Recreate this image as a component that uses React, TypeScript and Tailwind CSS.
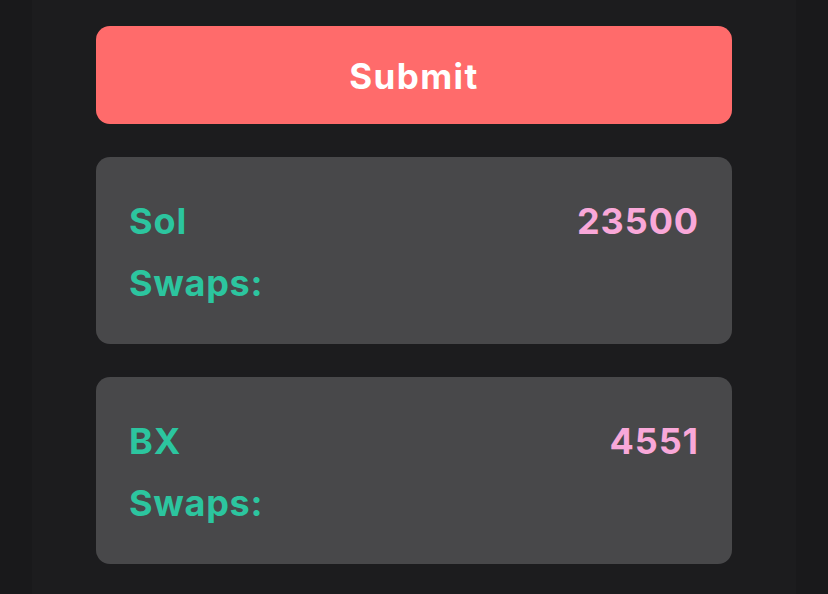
const balances = [
  { name: "Sol", amount: 23500 },
  { name: "BX", amount: 4551 },
];

export default function App() {
  return (
    <div className="min-h-[594px] bg-[#19191b]" style={{ fontFamily: "Inter, 'Noto Sans', sans-serif" }}>
      <div className="mx-[32px] min-h-[594px] bg-[#1c1c1e] px-[64px] pt-[26px]">
        <button className="w-full h-[98px] rounded-[14px] bg-[#ff6b6b] text-white text-[35px] font-bold tracking-[0.04em] pt-[2px]">
          Submit
        </button>
        <div className="mt-[33px] flex flex-col gap-[33px]">
          {balances.map((b) => (
            <div key={b.name} className="h-[187px] rounded-[14px] bg-[#48484a] px-[33px] pt-[42px]">
              <div className="flex items-center justify-between text-[36px] leading-[44px] font-bold tracking-[0.025em]">
                <span className="text-[#2cc59f]">{b.name}</span>
                <span className="text-[#f9a8d9]">{b.amount}</span>
              </div>
              <div className="mt-[18px] text-[36px] leading-[44px] font-bold tracking-[0.02em] text-[#2cc59f]">Swaps:</div>
            </div>
          ))}
        </div>
      </div>
    </div>
  );
}
